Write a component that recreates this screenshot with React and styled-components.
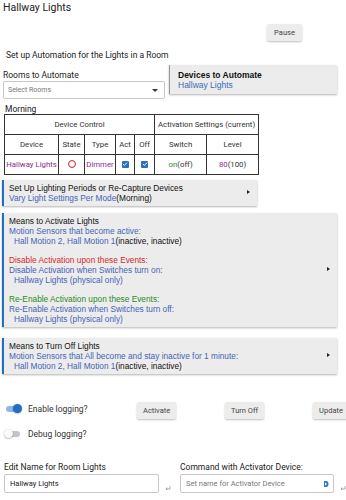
import styled, { createGlobalStyle } from 'styled-components';

const GlobalStyle = createGlobalStyle`
  body {
    margin: 0;
    background: #fff;
    font-family: Roboto, "Liberation Sans", Arial, sans-serif;
    color: #222;
  }
`;

const Page = styled.div`
  width: 346px;
  height: 500px;
  overflow: hidden;
  position: relative;
`;

const Title = styled.div`
  font-size: 10.5px;
  padding: 2px 0 0 3px;
  height: 20px;
  line-height: 11px;
`;

const PauseRow = styled.div`
  display: flex;
  justify-content: flex-end;
  padding-right: 44px;
  height: 24px;
  margin-top: 2px;
`;

const Button = styled.button`
  height: 17px;
  padding: 0 ${(p) => p.$pad || 6}px;
  min-width: ${(p) => p.$w || 36}px;
  border: none;
  border-radius: 2px;
  background: #ececec;
  box-shadow: 0 1px 2px rgba(0, 0, 0, 0.25);
  font-family: Roboto, sans-serif;
  font-size: 7.5px;
  color: #444;
`;

const Subtitle = styled.div`
  font-size: 8.5px;
  padding-left: 6px;
  height: 14px;
  line-height: 10px;
  margin-top: 2px;
`;

const TopGrid = styled.div`
  display: grid;
  grid-template-columns: 162px 168px;
  column-gap: 4px;
  padding-left: 3px;
  margin-top: 1px;
`;

const FieldLabel = styled.div`
  font-size: 8.5px;
  line-height: 10px;
  margin: ${(p) => p.$mt || 3}px 0 ${(p) => p.$mb || 2}px;
`;

const SelectBox = styled.div`
  height: 16px;
  border: 1px solid #c8c8c8;
  border-radius: 2px;
  display: flex;
  align-items: center;
  justify-content: space-between;
  padding: 0 6px 0 4px;
  font-size: 7px;
  color: #777;
`;

const Caret = styled.span`
  width: 0;
  height: 0;
  border-left: 3px solid transparent;
  border-right: 3px solid transparent;
  border-top: 3px solid #333;
`;

const InfoCard = styled.div`
  height: 29px;
  background: #ececec;
  border-left: 1px solid #999;
  box-shadow: 0 1px 2px rgba(0, 0, 0, 0.3);
  padding: 5px 0 0 8px;
  box-sizing: border-box;
  font-family: "Liberation Sans", Arial, sans-serif;
  font-size: 8.5px;
  line-height: 10px;
`;

const CardTitle = styled.div`
  font-weight: bold;
  color: #111;
`;

const LinkText = styled.div`
  color: ${(p) => p.$color || '#3a6db5'};
  padding-left: ${(p) => p.$indent || 0}px;
`;

const Morning = styled.div`
  font-size: 8.5px;
  line-height: 9px;
  padding-left: 5px;
  margin-top: 6px;
`;

const Table = styled.table`
  margin: 0 0 0 4px;
  border-collapse: collapse;
  border: 1.5px solid #222;
  font-size: 7.8px;
  color: #333;
  table-layout: fixed;
  width: 254px;
`;

const Cell = styled.td`
  border: 1px solid #333;
  height: 19px;
  padding: 0;
  text-align: center;
  white-space: nowrap;
  border-right-width: ${(p) => (p.$thick ? '1.5px' : '1px')};
  color: ${(p) => p.$color || '#333'};
`;

const Circle = styled.span`
  display: inline-block;
  width: 6px;
  height: 6px;
  border: 1.2px solid #d0202a;
  border-radius: 50%;
`;

const Check = styled.span`
  display: inline-flex;
  width: 7px;
  height: 7px;
  background: #2a6ec2;
  border-radius: 1px;
  align-items: center;
  justify-content: center;
`;

const Section = styled.div`
  margin: ${(p) => p.$mt || 7}px 0 0 2px;
  width: ${(p) => p.$w || 335}px;
  background: #ececec;
  border-left: 2.5px solid #1f6fc2;
  box-shadow: 0 1px 2px rgba(0, 0, 0, 0.3);
  box-sizing: border-box;
  padding: 3px 0 3px 5px;
  font-family: "Liberation Sans", Arial, sans-serif;
  font-size: 8.3px;
  line-height: 10px;
  color: #111;
  position: relative;
`;

const Arrow = styled.span`
  position: absolute;
  right: 7px;
  top: 50%;
  margin-top: -3px;
  width: 0;
  height: 0;
  border-top: 2.5px solid transparent;
  border-bottom: 2.5px solid transparent;
  border-left: 3.5px solid #222;
`;

const Gap = styled.div`
  height: 9px;
`;

const Dark = styled.span`
  color: #111;
`;

const Controls = styled.div`
  display: grid;
  grid-template-columns: 133px 88px 88px 1fr;
  align-items: center;
  margin-top: 24px;
  padding-left: 4px;
`;

const ToggleRow = styled.div`
  display: flex;
  align-items: center;
  gap: 8px;
  font-size: 8.5px;
  color: #333;
  height: ${(p) => p.$h || 17}px;
`;

const Track = styled.span`
  position: relative;
  width: 14px;
  height: 6px;
  border-radius: 3px;
  background: ${(p) => (p.$on ? '#8db8e6' : '#c4c4c4')};
  margin-left: 2px;
`;

const Knob = styled.span`
  position: absolute;
  top: -2px;
  left: ${(p) => (p.$on ? '7px' : '-2px')};
  width: 9px;
  height: 9px;
  border-radius: 50%;
  background: ${(p) => (p.$on ? '#1f6fc8' : '#fafafa')};
  box-shadow: 0 0.5px 1.5px rgba(0, 0, 0, 0.4);
`;

const DebugRow = styled(ToggleRow)`
  padding-left: 4px;
  margin-top: 6px;
`;

const InputGrid = styled.div`
  display: grid;
  grid-template-columns: 176px 166px;
  padding-left: 4px;
  margin-top: 17px;
`;

const InputWrap = styled.div`
  display: flex;
  align-items: flex-end;
  gap: 6px;
`;

const InputBox = styled.div`
  width: ${(p) => p.$w}px;
  height: 19px;
  border: 1px solid #c8c8c8;
  border-radius: 2px;
  box-sizing: border-box;
  display: flex;
  align-items: center;
  justify-content: space-between;
  padding: 0 4px 0 5px;
  font-size: 7.5px;
  color: ${(p) => (p.$placeholder ? '#777' : '#222')};
`;

function Resize() {
  return (
    <svg width="6" height="6" viewBox="0 0 6 6" style={{ marginBottom: 3 }}>
      <path d="M1 5h4M5 5V2M2 3.5L1 5l1.5 0.5" stroke="#888" strokeWidth="0.7" fill="none" />
    </svg>
  );
}

function Tick() {
  return (
    <svg width="6" height="6" viewBox="0 0 6 6">
      <path d="M1 3l1.4 1.4L5 1.6" stroke="#fff" strokeWidth="1" fill="none" />
    </svg>
  );
}

export default function App() {
  return (
    <Page>
      <GlobalStyle />
      <Title>Hallway Lights</Title>
      <PauseRow>
        <Button $w={35}>Pause</Button>
      </PauseRow>
      <Subtitle>Set up Automation for the Lights in a Room</Subtitle>
      <TopGrid>
        <div>
          <FieldLabel $mt={5} $mb={1}>Rooms to Automate</FieldLabel>
          <SelectBox>
            Select Rooms
            <Caret />
          </SelectBox>
        </div>
        <InfoCard>
          <CardTitle>Devices to Automate</CardTitle>
          <LinkText>Hallway Lights</LinkText>
        </InfoCard>
      </TopGrid>
      <Morning>Morning</Morning>
      <Table>
        <colgroup>
          <col style={{ width: 54 }} />
          <col style={{ width: 26 }} />
          <col style={{ width: 31 }} />
          <col style={{ width: 19 }} />
          <col style={{ width: 20 }} />
          <col style={{ width: 52 }} />
          <col style={{ width: 52 }} />
        </colgroup>
        <tbody>
          <tr>
            <Cell colSpan={5} $thick>Device Control</Cell>
            <Cell colSpan={2}>Activation Settings (current)</Cell>
          </tr>
          <tr>
            <Cell>Device</Cell>
            <Cell>State</Cell>
            <Cell>Type</Cell>
            <Cell>Act</Cell>
            <Cell $thick>Off</Cell>
            <Cell>Switch</Cell>
            <Cell>Level</Cell>
          </tr>
          <tr>
            <Cell $color="#8b2a8b">Hallway Lights</Cell>
            <Cell><Circle /></Cell>
            <Cell $color="#8b2a8b">Dimmer</Cell>
            <Cell><Check><Tick /></Check></Cell>
            <Cell $thick><Check><Tick /></Check></Cell>
            <Cell><span style={{ color: '#1f8a1f' }}>on</span>(off)</Cell>
            <Cell><span style={{ color: '#8b2a8b' }}>80</span>(100)</Cell>
          </tr>
        </tbody>
      </Table>
      <Section $mt={5} $w={255}>
        <div>Set Up Lighting Periods or Re-Capture Devices</div>
        <LinkText $color="#4663b8">
          Vary Light Settings Per Mode<Dark>(Morning)</Dark>
        </LinkText>
        <Arrow />
      </Section>
      <Section $mt={7}>
        <div>Means to Activate Lights</div>
        <LinkText $color="#4663b8">Motion Sensors that become active:</LinkText>
        <LinkText $color="#4663b8" $indent={5}>
          Hall Motion 2, Hall Motion 1<Dark>(inactive, inactive)</Dark>
        </LinkText>
        <Gap />
        <LinkText $color="#d42a2a">Disable Activation upon these Events:</LinkText>
        <LinkText $color="#4663b8">Disable Activation when Switches turn on:</LinkText>
        <LinkText $color="#4663b8" $indent={5}>Hallway Lights (physical only)</LinkText>
        <Gap />
        <LinkText $color="#2a8a2a">Re-Enable Activation upon these Events:</LinkText>
        <LinkText $color="#4663b8">Re-Enable Activation when Switches turn off:</LinkText>
        <LinkText $color="#4663b8" $indent={5}>Hallway Lights (physical only)</LinkText>
        <Arrow />
      </Section>
      <Section $mt={11}>
        <div>Means to Turn Off Lights</div>
        <LinkText $color="#4663b8">Motion Sensors that All become and stay inactive for 1 minute:</LinkText>
        <LinkText $color="#4663b8" $indent={5}>
          Hall Motion 2, Hall Motion 1<Dark>(inactive, inactive)</Dark>
        </LinkText>
        <Arrow />
      </Section>
      <Controls>
        <ToggleRow>
          <Track $on><Knob $on /></Track>
          Enable logging?
        </ToggleRow>
        <div><Button $w={39}>Activate</Button></div>
        <div><Button $w={39}>Turn Off</Button></div>
        <div><Button $w={36}>Update</Button></div>
      </Controls>
      <DebugRow>
        <Track><Knob /></Track>
        Debug logging?
      </DebugRow>
      <InputGrid>
        <div>
          <FieldLabel>Edit Name for Room Lights</FieldLabel>
          <InputWrap>
            <InputBox $w={155}>Hallway Lights</InputBox>
            <Resize />
          </InputWrap>
        </div>
        <div>
          <FieldLabel>Command with Activator Device:</FieldLabel>
          <InputWrap>
            <InputBox $w={155} $placeholder>
              Set name for Activator Device
              <svg width="6" height="8" viewBox="0 0 6 8">
                <path d="M1 1h2a2.5 3 0 0 1 0 6H1z" fill="#2a7ad0" />
                <path d="M2 2.5l2 1.5-2 1.5z" fill="#fff" />
              </svg>
            </InputBox>
            <Resize />
          </InputWrap>
        </div>
      </InputGrid>
    </Page>
  );
}
